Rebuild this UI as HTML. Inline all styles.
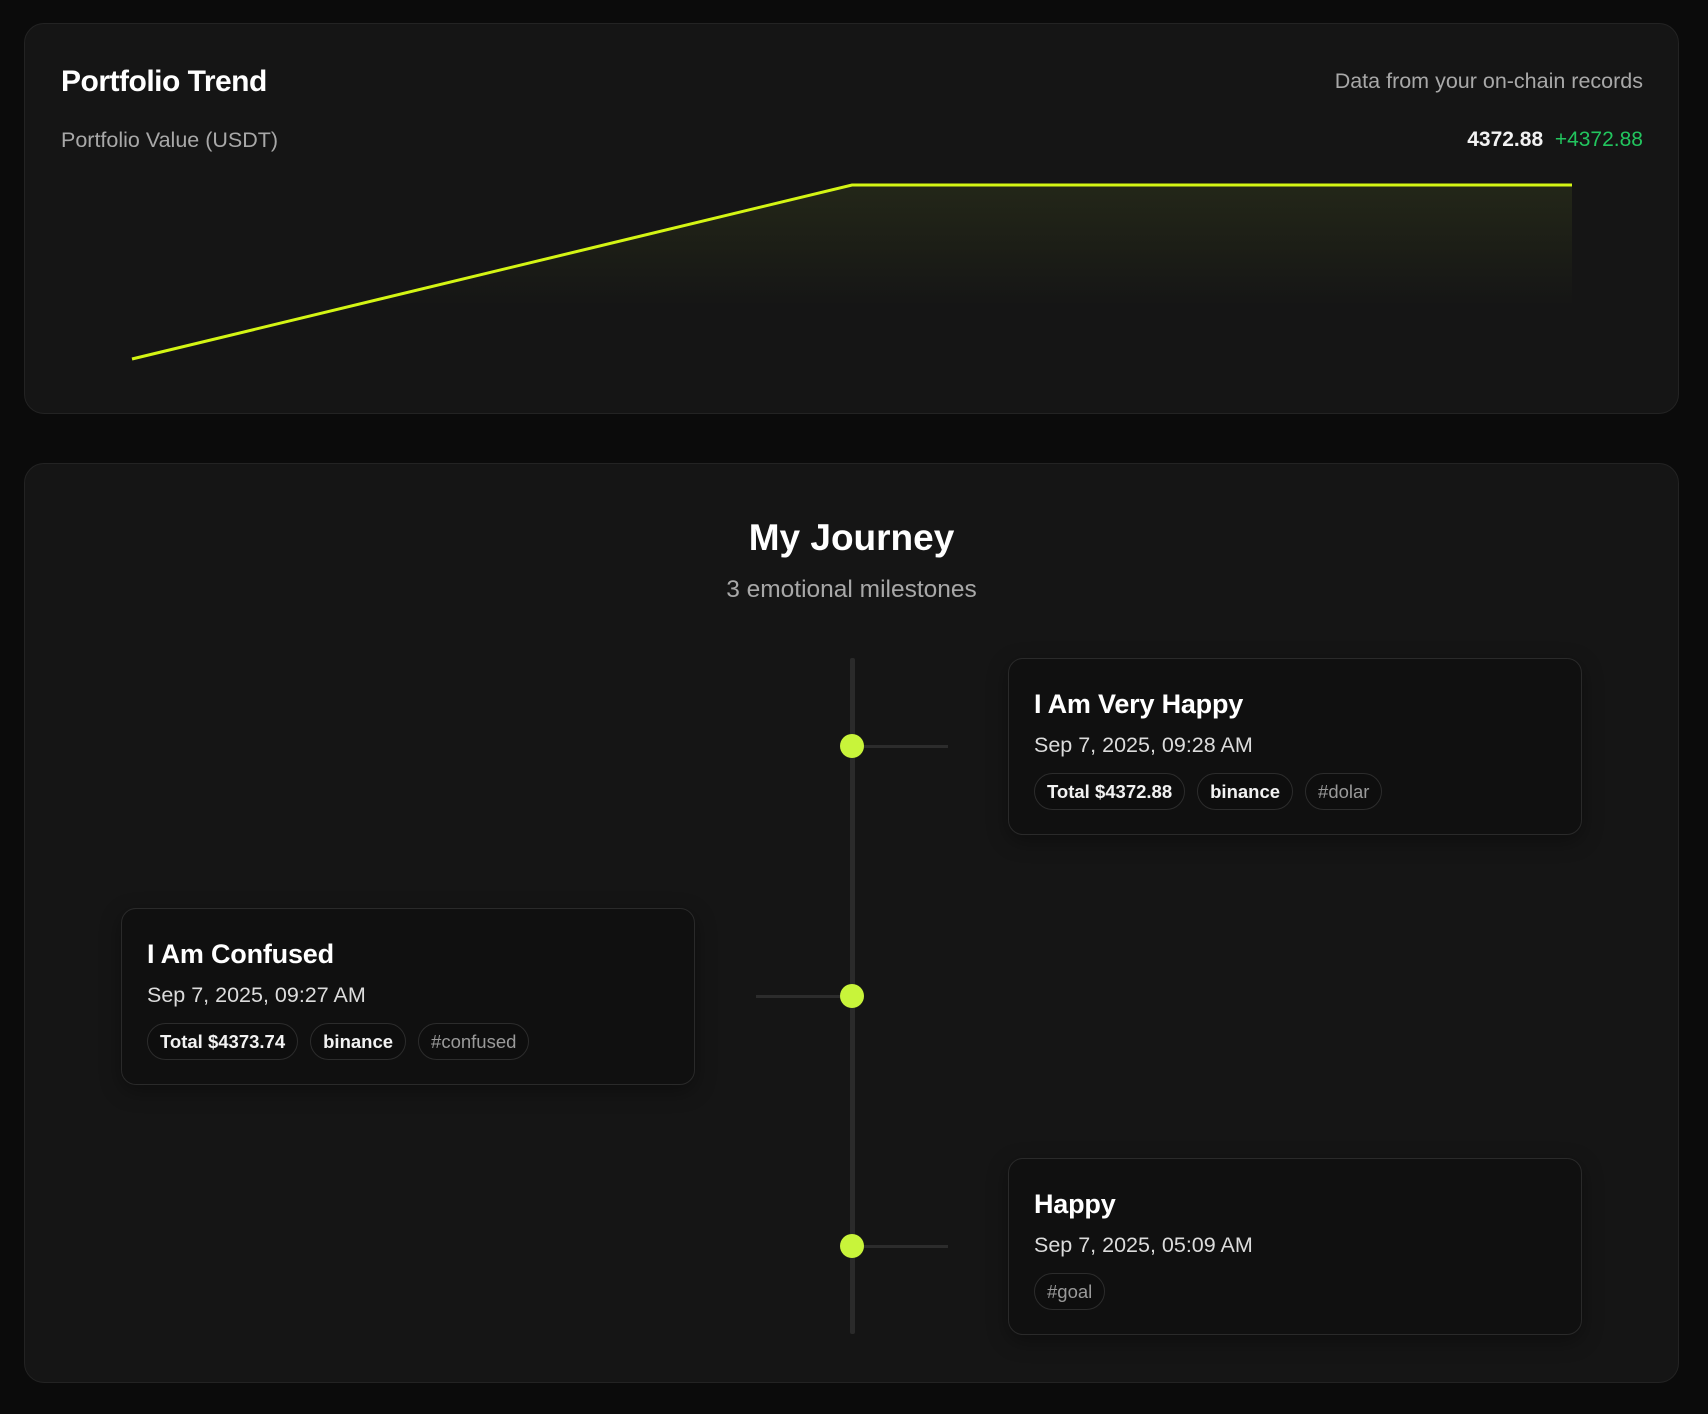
<!DOCTYPE html>
<html><head><meta charset="utf-8"><style>
*{box-sizing:border-box;margin:0;padding:0}
body{width:1708px;height:1414px;background:#0b0b0b;font-family:"Liberation Sans",sans-serif;position:relative;overflow:hidden}
.panel{position:absolute;left:24px;width:1655px;background:#151515;border:1px solid #232323;border-radius:20px}
.abs{position:absolute}
.card{position:absolute;width:574px;height:177px;background:#101010;border:1px solid #2a2a2a;border-radius:15px;box-shadow:0 6px 20px rgba(0,0,0,.35)}
.card h3{position:absolute;left:25px;top:30px;font-size:27px;color:#fff;font-weight:bold;letter-spacing:-0.2px}
.card .d{position:absolute;left:25px;top:74px;font-size:21.5px;color:#dcdcdc}
.tags{position:absolute;left:25px;top:114px;display:flex;gap:12px}
.tag{height:37px;line-height:35px;padding:0 12px;border:1px solid #2c2c2c;border-radius:19px;font-size:18.5px;color:#f2f2f2;font-weight:bold;background:#0e0e0e}
.tag.g{color:#9a9a9a;font-weight:normal}
.dot{position:absolute;width:24px;height:24px;border-radius:50%;background:#c8f43a;left:840px}
.conn{position:absolute;height:3px;background:#2c2c2c;width:96px}
</style></head><body>
<div class="panel" style="top:23px;height:391px">
  <div class="abs" style="left:36px;top:41px;font-size:30px;font-weight:bold;color:#fff;letter-spacing:-0.5px">Portfolio Trend</div>
  <div class="abs" style="right:35px;top:45px;font-size:21.5px;color:#a8a8a8">Data from your on-chain records</div>
  <div class="abs" style="left:36px;top:104px;font-size:21.5px;color:#a8a8a8">Portfolio Value (USDT)</div>
  <div class="abs" style="right:35px;top:104px;font-size:21px"><b style="color:#f2f2f2">4372.88</b>&nbsp;&nbsp;<span style="color:#22c55e">+4372.88</span></div>
</div>
<svg class="abs" style="left:0;top:0" width="1708" height="420">
<defs><linearGradient id="g" x1="0" y1="0" x2="0" y2="1"><stop offset="0" stop-color="#c8f43a" stop-opacity=".08"/><stop offset="0.7" stop-color="#c8f43a" stop-opacity="0"/></linearGradient></defs>
<path d="M132 359 L852 185 L1572 185 L1572 340 L852 340 Z" fill="url(#g)"/>
<polyline points="132,359 852,185 1572,185" fill="none" stroke="#d4f514" stroke-width="3"/>
</svg>
<div class="panel" style="top:463px;height:920px">
  <div class="abs" style="left:0;width:100%;text-align:center;top:53px;font-size:37px;font-weight:bold;color:#fff">My Journey</div>
  <div class="abs" style="left:0;width:100%;text-align:center;top:112px;font-size:24.5px;color:#a8a8a8">3 emotional milestones</div>
</div>
<div class="abs" style="left:850px;top:658px;width:5px;height:676px;background:#2a2a2a;border-radius:2px"></div>
<div class="conn" style="left:852px;top:745px"></div>
<div class="conn" style="left:756px;top:995px"></div>
<div class="conn" style="left:852px;top:1245px"></div>
<div class="dot" style="top:734px"></div>
<div class="dot" style="top:984px"></div>
<div class="dot" style="top:1234px"></div>
<div class="card" style="left:1008px;top:658px"><h3>I Am Very Happy</h3><div class="d">Sep 7, 2025, 09:28 AM</div><div class="tags"><span class="tag">Total $4372.88</span><span class="tag">binance</span><span class="tag g">#dolar</span></div></div>
<div class="card" style="left:121px;top:908px"><h3>I Am Confused</h3><div class="d">Sep 7, 2025, 09:27 AM</div><div class="tags"><span class="tag">Total $4373.74</span><span class="tag">binance</span><span class="tag g">#confused</span></div></div>
<div class="card" style="left:1008px;top:1158px"><h3>Happy</h3><div class="d">Sep 7, 2025, 05:09 AM</div><div class="tags"><span class="tag g">#goal</span></div></div>
</body></html>
